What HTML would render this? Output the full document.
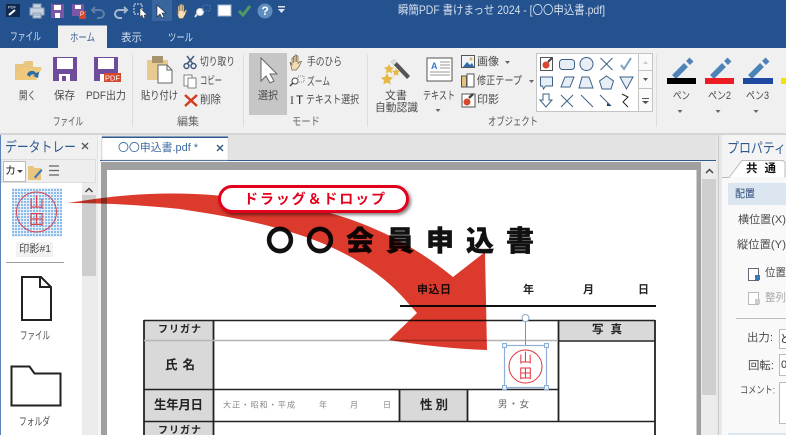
<!DOCTYPE html>
<html><head><meta charset="utf-8"><style>
html,body{margin:0;padding:0;background:#f0f0f0;overflow:hidden}
svg{display:block;position:absolute;left:0;top:0;filter:blur(.3px)}
text{font-family:"Liberation Sans","Noto Sans CJK JP",sans-serif;dominant-baseline:central;font-size:11px;fill:#4a4a4a}
.w{fill:#d5dfee}
.b{font-weight:700;fill:#222}
</style></head><body>
<svg width="786" height="435" viewBox="0 0 786 435" xmlns="http://www.w3.org/2000/svg">
<defs>
<pattern id="g" width="3" height="3" patternUnits="userSpaceOnUse"><rect width="3" height="3" fill="#e4effa"/><rect width="2" height="2" fill="#8dbbe8"/></pattern>
<filter id="s" x="-10%" y="-30%" width="120%" height="170%"><feDropShadow dx="2" dy="2" stdDeviation="1.5" flood-color="#000" flood-opacity=".5"/></filter>
</defs>
<!-- base -->
<rect width="786" height="435" fill="#f0f0f0"/>
<rect width="786" height="48" fill="#24528f"/>
<rect x="0" y="48" width="786" height="85" fill="#f0f0f0"/>
<rect x="0" y="133" width="786" height="2" fill="#d4d4d4"/>
<!-- QAT -->
<rect x="152" y="0" width="20" height="21" fill="#3a669f"/>
<rect x="6" y="4" width="14" height="13" fill="#10294f"/>
<text x="8" y="7" style="font-size:4px;fill:#fff">PDF</text>
<path d="M9 15l6-5" stroke="#fff" stroke-width="2"/>
<path d="M30 8h14v7H30zM33 4h8v4h-8zM33 13h8v5h-8z" fill="#c9d3e0" stroke="#8fa1ba"/>
<path d="M51 4h13v14H51z" fill="#7b55a6"/><path d="M54 5h7v5h-7z" fill="#fff"/><rect x="55" y="13" width="5" height="5" fill="#fff"/>
<path d="M72 4h12v12H72z" fill="#7b55a6"/><path d="M75 5h6v4h-6z" fill="#fff"/><rect x="79" y="11" width="7" height="8" fill="#d2482e"/>
<text x="80" y="15" style="font-size:6px;fill:#fff">P</text>
<path d="M95 7l-3 3 3 3M92 10h8a4 4 0 0 1 0 8h-3" fill="none" stroke="#5f7ea8" stroke-width="2"/>
<path d="M124 7l3 3-3 3M127 10h-8a4 4 0 0 0 0 8h3" fill="none" stroke="#a6b6cc" stroke-width="2"/>
<rect x="134" y="4" width="8" height="10" fill="none" stroke="#dfe6f0" stroke-dasharray="2 1"/>
<path d="M140 8l7 7-3 0 1 3-2 0-1-3-2 2z" fill="#fff" stroke="#333" stroke-width=".5"/>
<path d="M157 5v12l3-3 2 4 2-1-2-4h4z" fill="#fff" stroke="#222" stroke-width=".6"/>
<path d="M176 11l2 3v-8h1.500v5V4.500h1.500V11V4h1.500v7V5h1.500v7l1.500-2h1.500l-2 5-2 3.500h-4z" fill="#f7dfb9" stroke="#6b5a40" stroke-width=".6"/>
<circle cx="200" cy="12" r="3.500" fill="#fff" stroke="#ccc"/><path d="M197 14l-2 3" stroke="#ddd" stroke-width="2"/>
<rect x="203" y="5" width="7" height="6" fill="none" stroke="#5f7ea8" stroke-dasharray="1 1"/>
<rect x="218" y="5" width="13" height="11" fill="#fff" stroke="#9fb2cb"/>
<path d="M239 11l4 4 7-9" fill="none" stroke="#4f9a62" stroke-width="3"/>
<circle cx="265" cy="11" r="7.500" fill="#5f8dc0"/><text x="261.500" y="11" style="font-size:12px;fill:#fff;font-weight:700">?</text>
<path d="M278 6h7v1.500h-7zM278 9h7l-3.500 4z" fill="#dfe6f0"/>
<text x="398" y="10" class="w" style="font-size:12px" textLength="207" lengthAdjust="spacingAndGlyphs">瞬簡PDF 書けまっせ 2024 - [〇〇申込書.pdf]</text>
<!-- tabs -->
<path d="M58 48V25.500h49V48z" fill="#f0f0f0"/>
<text x="10" y="37" class="w" textLength="31" lengthAdjust="spacingAndGlyphs" style="font-size:11px">ファイル</text>
<text x="70" y="38" textLength="25" lengthAdjust="spacingAndGlyphs" style="font-size:11px;fill:#3b5f8f">ホーム</text>
<text x="121" y="38" class="w" textLength="21" lengthAdjust="spacingAndGlyphs">表示</text>
<text x="168" y="38" class="w" textLength="25" lengthAdjust="spacingAndGlyphs">ツール</text>
<!-- ribbon seps -->
<path d="M132.500 55v72M243.500 55v72M367.500 55v72M656.500 55v72" stroke="#dcdcdc"/>
<rect x="249" y="53" width="38" height="62" fill="#c6c6c6"/>
<!-- file group icons -->
<path d="M15 64h8l2-3h8v6h8l-5 13H15z" fill="#e9c67f"/><path d="M15 80l5-12h22l-6 12z" fill="#eec97b"/><path d="M27 75a5 5 0 0 1 9-2l3-1-1 6-5-2 2-1a3 3 0 0 0-5 2z" fill="#2e6ca8"/>
<path d="M53 57h24v24H53z" fill="#6f4b9c"/><rect x="57" y="58" width="16" height="11" fill="#fff"/><rect x="59" y="74" width="11" height="7" fill="#fff"/><rect x="62" y="76" width="4" height="5" fill="#6f4b9c"/>
<path d="M94 57h24v24H94z" fill="#6f4b9c"/><rect x="98" y="58" width="16" height="11" fill="#fff"/><rect x="100" y="74" width="8" height="7" fill="#fff"/>
<rect x="104" y="73" width="17" height="9" fill="#d2492f"/><text x="105" y="78" textLength="15" lengthAdjust="spacingAndGlyphs" style="font-size:7.500px;fill:#fff">PDF</text>
<text x="19" y="96" textLength="17" lengthAdjust="spacingAndGlyphs">開く</text><text x="54" y="96" textLength="21" lengthAdjust="spacingAndGlyphs">保存</text><text x="86" y="96" textLength="40" lengthAdjust="spacingAndGlyphs">PDF出力</text>
<text x="53" y="122" textLength="30" lengthAdjust="spacingAndGlyphs" style="fill:#555">ファイル</text>
<!-- edit -->
<path d="M147 60h21v20h-21z" fill="#e8c98f"/><rect x="152" y="56" width="11" height="7" fill="#a6946f"/>
<path d="M158 65h9l5 5v13h-14z" fill="#fff" stroke="#666"/><path d="M167 65v5h5" fill="none" stroke="#666"/>
<text x="141" y="96" textLength="37" lengthAdjust="spacingAndGlyphs">貼り付け</text>
<text x="200" y="62" textLength="35" lengthAdjust="spacingAndGlyphs">切り取り</text><text x="200" y="81" textLength="22" lengthAdjust="spacingAndGlyphs">コピー</text><text x="200" y="100" textLength="21" lengthAdjust="spacingAndGlyphs">削除</text>
<g fill="none" stroke="#3e5c80" stroke-width="1.500"><path d="M187 56l6 8M194 56l-7 8"/><circle cx="186.500" cy="66" r="2.500"/><circle cx="193.500" cy="66" r="2.500"/></g>
<g fill="#fff" stroke="#666" stroke-width=".8"><rect x="184" y="75" width="8" height="11"/><rect x="188" y="78" width="8" height="10"/></g>
<path d="M185 95l12 11M197 95l-12 11" stroke="#d63b22" stroke-width="2.500"/>
<text x="177" y="122" textLength="22" lengthAdjust="spacingAndGlyphs" style="fill:#666">編集</text>
<!-- mode -->
<path d="M261 58v23l5-5 4 7 4-2-4-7h7z" fill="#fff" stroke="#666"/>
<text x="258" y="96" textLength="20" lengthAdjust="spacingAndGlyphs">選択</text>
<path d="M290 62l2 3v-7h1.500v5-6.500h1.500V62v-7h1.500v7-6h1.500v7.500l2-2h1.500l-2.500 5-3 3.500h-4z" fill="#f3ddb5" stroke="#77654a" stroke-width=".7"/>
<circle cx="295" cy="81" r="3" fill="#fff" stroke="#444"/><path d="M293 83l-3 3" stroke="#444" stroke-width="1.500"/><rect x="298" y="76" width="6" height="6" fill="none" stroke="#889" stroke-dasharray="1 1"/>
<text x="290" y="100" style="font-size:12px;fill:#444;font-family:'Liberation Serif',serif">I</text><text x="296" y="100" style="font-size:12px;fill:#222;font-family:'Liberation Sans'">T</text>
<text x="307" y="62" textLength="35" lengthAdjust="spacingAndGlyphs">手のひら</text><text x="307" y="82" textLength="23" lengthAdjust="spacingAndGlyphs">ズーム</text><text x="306" y="100" textLength="53" lengthAdjust="spacingAndGlyphs">テキスト選択</text>
<text x="292" y="122" textLength="28" lengthAdjust="spacingAndGlyphs" style="fill:#666">モード</text>
<!-- object -->
<path d="M394 59l16 17-3 3-16-17z" fill="#555"/><path d="M391 62l3-3 3 3-3 3z" fill="#ddd"/>
<path d="M389 64l1.500 3 3.500.5-2.500 2.500.5 3.500-3-1.700-3 1.700.5-3.500-2.500-2.500 3.500-.5zM387 73l2 4 4 .5-3 3 .7 4-3.700-2-3.700 2 .7-4-3-3 4-.5zM396 68l1 2.500 3 .4-2 2 .5 3-2.500-1.400-2.500 1.400.5-3-2-2 3-.4z" fill="#e8b845"/>
<text x="385" y="96" textLength="22" lengthAdjust="spacingAndGlyphs">文書</text><text x="375" y="108" textLength="43" lengthAdjust="spacingAndGlyphs">自動認識</text>
<rect x="427" y="58" width="25" height="23" fill="#fff" stroke="#555"/><text x="431" y="66" style="font-size:9px;font-weight:700;fill:#3a78c0">A</text>
<path d="M440 62h10M440 65h10M440 68h10M430 72h20M430 75h20" stroke="#999"/>
<text x="423" y="96" textLength="32" lengthAdjust="spacingAndGlyphs">テキスト</text><path d="M435.500 109h5l-2.500 3z" fill="#666"/>
<rect x="461.500" y="55.500" width="13" height="12" fill="#eef4fa" stroke="#555"/><path d="M463 67l4-5 3 3 2-2 2 4z" fill="#2f6ca8"/><circle cx="471" cy="59" r="1.500" fill="#e0b050"/>
<path d="M467 74h7v13h-7z" fill="#fff" stroke="#555"/><path d="M461.500 76h5v11h-5z" fill="#e4c27b" stroke="#555"/>
<rect x="462" y="94" width="13" height="13" fill="#fff" stroke="#555"/><circle cx="467" cy="102" r="3.500" fill="#d6492f"/><path d="M469 98l4-4" stroke="#444" stroke-width="2.500"/>
<text x="477" y="62" textLength="22" lengthAdjust="spacingAndGlyphs">画像</text><text x="477" y="81" textLength="45" lengthAdjust="spacingAndGlyphs">修正テープ</text><text x="477" y="100" textLength="22" lengthAdjust="spacingAndGlyphs">印影</text>
<path d="M505 61h5l-2.500 3zM529 80h5l-2.500 3z" fill="#666"/>
<text x="488" y="122" textLength="50" lengthAdjust="spacingAndGlyphs" style="fill:#555">オブジェクト</text>
<!-- gallery -->
<rect x="536.500" y="53.500" width="116" height="58" fill="#fff" stroke="#c4c4c4"/>
<rect x="639" y="54" width="13" height="57" fill="#fafafa"/><path d="M638.500 53v58M639 70.500h14M639 88.500h14" stroke="#c4c4c4"/>
<path d="M643 64l2.500-3 2.500 3z" fill="#ccc"/><path d="M643 78h5l-2.500 3z" fill="#555"/><path d="M642 98h7v1h-7zM642 101h7l-3.500 3z" fill="#555"/>
<g fill="#e8eef5" stroke="#3e6288" stroke-width="1">
<rect x="540.500" y="57.500" width="12" height="13" fill="#fff" stroke="#555"/>
<rect x="559.500" y="59.500" width="15" height="10" rx="3"/>
<circle cx="586.500" cy="64" r="6.500"/>
<path d="M600.500 58l12 12M612.500 58l-12 12" fill="none"/>
<path d="M540.500 77h12v9h-7l-2 3-1-3h-2z"/>
<path d="M561 87l4-10h9l-4 10z"/>
<path d="M579 88l3-11h7l4 11z"/>
<path d="M606.500 76l7 5-2.500 8h-9l-2.500-8z"/>
<path d="M620 77h13l-6.500 12z"/>
<path d="M543 94h6v6h3l-6 7-6-7h3z" fill="#fff"/>
<path d="M561 95l12 12M573 95l-12 12" fill="none"/>
<path d="M581 95l12 12" fill="none"/>
<path d="M600 95l11 11" fill="none"/>
<path d="M622 94l6 3-5 5 5 5" fill="none" stroke="#222"/>
</g>
<circle cx="546" cy="65" r="3.500" fill="#d6492f"/><path d="M548 62l4-4" stroke="#444" stroke-width="2"/>
<path d="M621 65l3 4 7-11" fill="none" stroke="#7ea0c4" stroke-width="2"/>
<path d="M611 106h-4v-3z" fill="#1f3f66"/>
<!-- pens -->
<g stroke="#4d84b8" stroke-width="5.500" fill="none"><path d="M674 77l12-12M688 63l3.500-3.500M712 77l12-12M726 63l3.500-3.500M750 77l12-12M764 63l3.500-3.500"/></g>
<rect x="667" y="78" width="29" height="6" fill="#000"/><rect x="705" y="78" width="29" height="6" fill="#ec1c24"/><rect x="743" y="78" width="30" height="6" fill="#1f48a0"/><rect x="781" y="78" width="5" height="6" fill="#f4e200"/>
<text x="673" y="96" textLength="17" lengthAdjust="spacingAndGlyphs">ペン</text><text x="708" y="96" textLength="23" lengthAdjust="spacingAndGlyphs">ペン2</text><text x="746" y="96" textLength="23" lengthAdjust="spacingAndGlyphs">ペン3</text>
<path d="M677.500 110h5l-2.500 3zM715.500 110h5l-2.500 3zM753.500 110h5l-2.500 3z" fill="#666"/>
<!-- band -->
<rect x="0" y="135" width="786" height="300" fill="#e3e3e3"/>
<!-- left panel -->
<rect x="0" y="135" width="1" height="300" fill="#5b85b8"/>
<rect x="1" y="135" width="96" height="300" fill="#f0f0f0"/>
<text x="5" y="147" textLength="71" lengthAdjust="spacingAndGlyphs" style="font-size:14px;fill:#2f5a90">データトレー</text>
<path d="M82 143l6 6M88 143l-6 6" stroke="#555" stroke-width="1.300"/>
<rect x="1.500" y="159.500" width="94" height="23" fill="#eee" stroke="#ddd"/>
<rect x="3.500" y="161.500" width="22" height="20" fill="#fff" stroke="#bbb"/>
<text x="5" y="171" style="font-size:11px;fill:#222">カ</text><path d="M17 170h6l-3 3z" fill="#444"/>
<path d="M28 166h5l1.500 2H41v12H28z" fill="#e9c67f"/><path d="M34 177l7-8 1.500 1.500-7 8z" fill="#3a78b8"/>
<path d="M49 166h10M49 170.500h10M49 175h10" stroke="#666" stroke-width="1.200"/>
<rect x="1" y="183" width="81" height="252" fill="#fff"/>
<rect x="82" y="183" width="16" height="252" fill="#ececec"/>
<rect x="82" y="195" width="14" height="81" fill="#cdcdcd"/>
<path d="M85.500 192l3.500-3.500 3.500 3.500" fill="none" stroke="#444" stroke-width="1.500"/>
<rect x="98" y="135" width="3" height="300" fill="#f4f4f4"/>
<rect x="12" y="188" width="50" height="49" fill="url(#g)"/>
<circle cx="36.500" cy="212" r="20" fill="none" stroke="#d8434f" stroke-width="1"/>
<text x="36.500" y="203" text-anchor="middle" style="font-size:15px;fill:#d8434f">山</text>
<text x="36.500" y="220" text-anchor="middle" style="font-size:15px;fill:#d8434f">田</text>
<rect x="16" y="242" width="37" height="15" fill="#f2f2f2"/>
<text x="19" y="249" textLength="32" lengthAdjust="spacingAndGlyphs" style="font-size:10.500px">印影#1</text>
<path d="M6 262.500h58" stroke="#9a9a9a"/>
<path d="M22 277h19l10 10v33H22z" fill="#fff" stroke="#222" stroke-width="2"/><path d="M40 277v10h11" fill="none" stroke="#222" stroke-width="2"/>
<text x="20" y="336" textLength="30" lengthAdjust="spacingAndGlyphs">ファイル</text>
<path d="M11.500 366.500h18l5 7h26v32h-49z" fill="#fff" stroke="#222" stroke-width="2"/>
<text x="19" y="422" textLength="31" lengthAdjust="spacingAndGlyphs">フォルダ</text>
<!-- doc area -->
<rect x="101" y="162" width="600" height="273" fill="#a0a0a0"/>
<rect x="107" y="170" width="589.500" height="265" fill="#fff"/>
<rect x="701" y="162" width="15" height="273" fill="#ececec"/>
<rect x="702" y="179" width="14" height="216" fill="#cfcfcf"/>
<path d="M706 173l3.500-3.500 3.500 3.500" fill="none" stroke="#444" stroke-width="1.500"/>
<rect x="100" y="160" width="620" height="1" fill="#2f5a90"/>
<rect x="100" y="161" width="620" height="1" fill="#f2f2f2"/>
<rect x="102" y="137" width="126" height="23" fill="#fff" stroke="#c9c9c9" stroke-width=".5"/>
<rect x="102" y="136.500" width="126" height="1.500" fill="#2f5a90"/>
<text x="118" y="148" textLength="80" lengthAdjust="spacingAndGlyphs" style="font-size:11px;fill:#3d6aa0">〇〇申込書.pdf *</text>
<path d="M217 145l6 6M223 145l-6 6" stroke="#3d5f88" stroke-width="1.500"/>
<rect x="716" y="135" width="6" height="300" fill="#e8e8e8"/>
<path d="M718.500 135v300" stroke="#c8c8c8"/>
<!-- right panel -->
<rect x="722" y="135" width="64" height="300" fill="#f4f4f4"/>
<text x="727" y="148" textLength="59" lengthAdjust="spacingAndGlyphs" style="font-size:14px;fill:#2f5a90">プロパティ</text>
<rect x="722" y="178" width="64" height="257" fill="#f9f9f9"/>
<path d="M722 177.500h7l13-17h41l2 2v15" fill="#fff" stroke="#bbb"/>
<text x="746" y="169" textLength="30" style="font-size:11.500px;font-weight:700;fill:#111">共 通</text>
<rect x="728" y="183" width="58" height="22" fill="#dce6f0"/>
<text x="735" y="194" textLength="20" lengthAdjust="spacingAndGlyphs" style="fill:#2b4a78;font-size:10.500px">配置</text>
<text x="738" y="220" textLength="48" lengthAdjust="spacingAndGlyphs">横位置(X)</text>
<text x="737" y="245" textLength="49" lengthAdjust="spacingAndGlyphs">縦位置(Y)</text>
<rect x="748.500" y="268.500" width="10" height="12" fill="#fff" stroke="#667"/><rect x="755" y="275" width="5" height="5" fill="#3a78b8"/>
<text x="765" y="273" textLength="21" lengthAdjust="spacingAndGlyphs">位置</text>
<rect x="748.500" y="292.500" width="10" height="12" fill="#fff" stroke="#bbb"/><rect x="755" y="299" width="5" height="5" fill="#ccc"/>
<text x="765" y="298" textLength="21" lengthAdjust="spacingAndGlyphs" style="fill:#aaa">整列</text>
<path d="M736 318.500h50" stroke="#bdbdbd"/>
<text x="747" y="338" textLength="26" lengthAdjust="spacingAndGlyphs">出力:</text>
<rect x="779.500" y="329.500" width="10" height="19" fill="#fff" stroke="#bbb"/><text x="780" y="339" style="fill:#333">ど</text>
<text x="748" y="366" textLength="26" lengthAdjust="spacingAndGlyphs">回転:</text>
<rect x="779.500" y="354.500" width="10" height="21" fill="#fff" stroke="#bbb"/><text x="781" y="365" style="fill:#333">0</text>
<text x="740" y="391" textLength="35" lengthAdjust="spacingAndGlyphs" style="font-size:10px">コメント:</text>
<rect x="779.500" y="382.500" width="10" height="41" fill="#fff" stroke="#bbb"/>
<rect x="728" y="433" width="58" height="2" fill="#dce6f0"/>
<!-- form -->
<text x="266" y="241" style="font-size:28px;font-weight:900;fill:#111;stroke:#111;stroke-width:.4" textLength="268">〇〇会員申込書</text>
<text x="417" y="290" textLength="34" class="b" style="fill:#1c1c1c">申込日</text>
<text x="523" y="290" class="b">年</text><text x="583" y="290" class="b">月</text><text x="638" y="290" class="b">日</text>
<rect x="400" y="305" width="256" height="2" fill="#111"/>
<rect x="144" y="320" width="69" height="115" fill="#d9d9d9"/>
<rect x="399" y="389" width="68" height="32" fill="#d9d9d9"/>
<rect x="558" y="320" width="97" height="20" fill="#d9d9d9"/>
<path d="M144 320.500H655M144 389.500H558M144 421.500H655" stroke="#222" stroke-width="1.600"/>
<path d="M144 320v115M213.500 320v115M399.500 389v32M467.500 389v32M558.500 320v101M655 320v115" stroke="#222" stroke-width="1.800"/>
<path d="M144 340.500H558" stroke="#b5b5b5" stroke-width="1.500"/>
<path d="M558 341H655" stroke="#222" stroke-width="1.500"/>
<text x="158" y="330" textLength="43" class="b" style="font-size:10px">フリガナ</text>
<text x="165" y="365" textLength="30" class="b" style="font-size:12.500px">氏 名</text>
<text x="154" y="405" textLength="49" class="b" style="font-size:12.500px">生年月日</text>
<text x="158" y="431" textLength="43" class="b" style="font-size:10px">フリガナ</text>
<text x="223" y="405" textLength="72" style="font-size:8px;fill:#888">大正・昭和・平成</text>
<text x="319" y="405" style="font-size:8px;fill:#888">年</text><text x="350" y="405" style="font-size:8px;fill:#888">月</text><text x="383" y="405" style="font-size:8px;fill:#888">日</text>
<text x="420" y="405" textLength="28" class="b" style="font-size:12.500px">性 別</text>
<text x="498" y="405" textLength="31" style="font-size:9.500px;fill:#666">男・女</text>
<text x="592" y="330" textLength="30" class="b" style="font-size:11.500px">写 真</text>
<!-- stamp selection -->
<path d="M525.500 322v23" stroke="#6e96c4"/>
<circle cx="525.500" cy="318" r="3.500" fill="#fff" stroke="#8aa8cc"/>
<rect x="504.500" y="345.500" width="42" height="42" fill="none" stroke="#8eb0d8" stroke-width="1.200"/>
<g fill="#eef3fa" stroke="#8eb0d8"><rect x="502.500" y="343.500" width="4" height="4"/><rect x="544.500" y="343.500" width="4" height="4"/><rect x="502.500" y="385.500" width="4" height="4"/><rect x="544.500" y="385.500" width="4" height="4"/></g>
<circle cx="525.500" cy="366.500" r="16.500" fill="none" stroke="#e2323c" stroke-width="1"/>
<text x="525.500" y="358" text-anchor="middle" style="font-size:13px;fill:#e2323c">山</text>
<text x="525.500" y="373.500" text-anchor="middle" style="font-size:13px;fill:#e2323c">田</text>
<!-- arrow -->
<path d="M68 203C110 196 150 192 195 194C240 196 290 204 330 213C380 227 420 250 453 277L485 252L487 350C455 349 420 345 389 340L417 313L408 303C380 270 340 248 300 235C260 222 220 215 180 209C140 205 105 203 68 203Z" fill="#dc3a2c" style="mix-blend-mode:multiply"/>
<!-- pill -->
<rect x="219.500" y="186.500" width="188" height="25" rx="12.500" fill="#fff" stroke="#e2001a" stroke-width="3" filter="url(#s)"/>
<text x="244" y="199" textLength="141" style="font-size:14px;font-weight:700;fill:#e2001a">ドラッグ＆ドロップ</text>
</svg>
</body></html>
